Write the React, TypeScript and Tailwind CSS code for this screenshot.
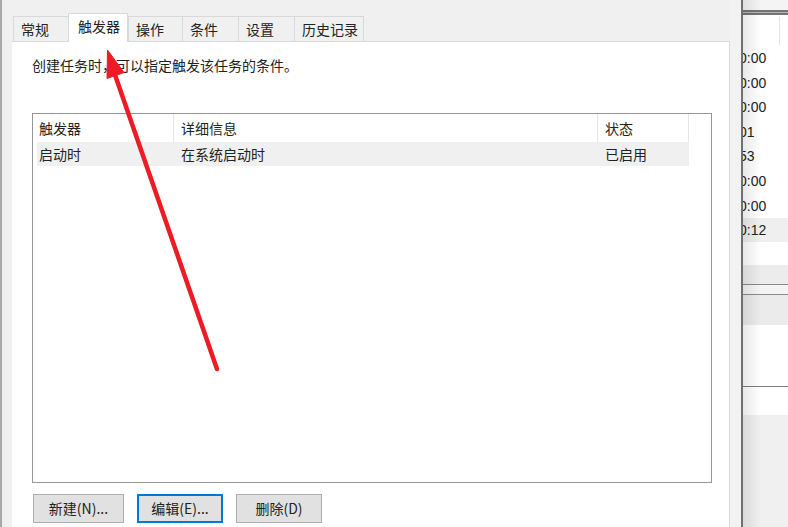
const tabs = [
  { label: '常规', w: 'w-[55px]' },
  { label: '触发器', w: 'w-[60px]', active: true },
  { label: '操作', w: 'w-[54px]' },
  { label: '条件', w: 'w-[56px]' },
  { label: '设置', w: 'w-[56px]' },
  { label: '历史记录', w: 'w-[70px]', last: true },
];

const times = ['0:00', '0:00', '0:00', '01', '53', '0:00', '0:00', '0:12'];

function TabStrip() {
  return (
    <div className="flex h-[41px] items-end pl-[1px]">
      {tabs.map((t) =>
        t.active ? (
          <div
            key={t.label}
            className={`${t.w} relative z-10 -mb-px flex h-[29px] items-center border-x border-t border-[#d9d9d9] bg-white pb-[4px] pl-[9px] leading-[20px]`}
          >
            {t.label}
          </div>
        ) : (
          <div
            key={t.label}
            className={`${t.w} flex h-[25px] items-center border-t border-l border-[#d9d9d9] bg-[#f0f0f0] pb-px pl-[7px] leading-[20px] ${t.last ? 'border-r' : ''}`}
          >
            {t.label}
          </div>
        ),
      )}
    </div>
  );
}

function Button({ label, w, focused }: { label: string; w: string; focused?: boolean }) {
  return (
    <div
      className={`${w} flex h-[29px] items-center justify-center bg-[#e1e1e1] pb-px leading-[20px] ${
        focused ? 'border-2 border-[#0078d7]' : 'border border-[#adadad]'
      }`}
    >
      {label}
    </div>
  );
}

function TriggerPanel() {
  return (
    <div className="flex-1 border-t border-r border-[#dadada] bg-white pt-[13px] pl-[20px]">
      <p className="leading-[20px]">创建任务时，可以指定触发该任务的条件。</p>

      <div className="mt-[38px] h-[370px] w-[680px] border border-[#979797] bg-white">
        <div className="flex h-[28px] items-center pl-[4px] leading-[20px]">
          <div className="flex h-full w-[136px] items-center pb-px pl-[2px]">触发器</div>
          <div className="flex h-full w-[424px] items-center border-l border-[#e5e5e5] pb-px pl-[7px]">详细信息</div>
          <div className="flex h-full w-[92px] items-center border-x border-[#e5e5e5] pb-px pl-[7px]">状态</div>
        </div>
        <div className="ml-[4px] flex h-[24px] w-[652px] items-center bg-[#f0f0f0] pb-px leading-[20px]">
          <div className="w-[136px] pl-[2px]">启动时</div>
          <div className="w-[424px] pl-[8px]">在系统启动时</div>
          <div className="w-[92px] pl-[8px]">已启用</div>
        </div>
      </div>

      <div className="mt-[11px] ml-[1px] flex gap-[13px]">
        <Button label="新建(N)..." w="w-[91px]" />
        <Button label="编辑(E)..." w="w-[86px]" focused />
        <Button label="删除(D)" w="w-[86px]" />
      </div>
    </div>
  );
}

function SideWindow() {
  return (
    <div className="relative flex w-[45px] shrink-0 flex-col bg-[#f0f0f0]">
      <div className="h-[10px] bg-[#f4f4f4]" />
      <div className="h-[5px] border-y-2 border-[#747474] bg-[#b4b4b4]" />
      <div className="flex h-[30.7px] bg-white">
        <div className="mt-[2px] h-[28px] w-[37px] border-r border-[#e3e3e3]" />
      </div>
      {times.map((t, i) => (
        <div
          key={i}
          className={`flex h-[24.6px] items-center overflow-hidden whitespace-nowrap font-['Liberation_Sans',sans-serif] leading-[20px] ${
            i === 7 ? 'bg-[#efefef]' : 'bg-white'
          }`}
        >
          <span className="-ml-[4px]">{t}</span>
        </div>
      ))}
      <div className="h-[22.5px] bg-white" />
      <div className="h-[19px] bg-[#ececec]" />
      <div className="h-px bg-[#8a8a8a]" />
      <div className="h-[9px] bg-[#f4f4f4]" />
      <div className="h-px bg-[#8a8a8a]" />
      <div className="h-[30px] bg-[#ebebeb]" />
      <div className="h-[61px] bg-white" />
      <div className="h-px bg-[#7e7e7e]" />
      <div className="h-[28px] bg-white" />
      <div className="flex-1 bg-[#f0f0f0]" />
      <div className="pointer-events-none absolute top-0 left-0 h-full w-[18px] bg-gradient-to-r from-black/[0.09] to-transparent" />
    </div>
  );
}

function Arrow() {
  return (
    <svg className="pointer-events-none absolute top-0 left-0" width="788" height="527" viewBox="0 0 788 527">
      <line x1="217" y1="369" x2="114" y2="72" stroke="#ec1b24" strokeWidth="4.5" strokeLinecap="round" />
      <polygon points="107.5,50 124,72.5 107,78.5" fill="#ec1b24" stroke="#ec1b24" strokeWidth="1" strokeLinejoin="round" />
    </svg>
  );
}

export default function App() {
  return (
    <div className="relative flex h-[527px] w-[788px] overflow-hidden bg-[#f0f0f0] font-['Noto_Sans_CJK_SC',sans-serif] text-[14px] text-[#222]">
      <div className="w-[12px] shrink-0 border-l-2 border-[#a8a8a8]" />
      <div className="flex w-[718px] shrink-0 flex-col">
        <TabStrip />
        <TriggerPanel />
      </div>
      <div className="w-[13px] shrink-0 border-r-2 border-[#707070] bg-[#f2f2f2]" />
      <SideWindow />
      <Arrow />
    </div>
  );
}
